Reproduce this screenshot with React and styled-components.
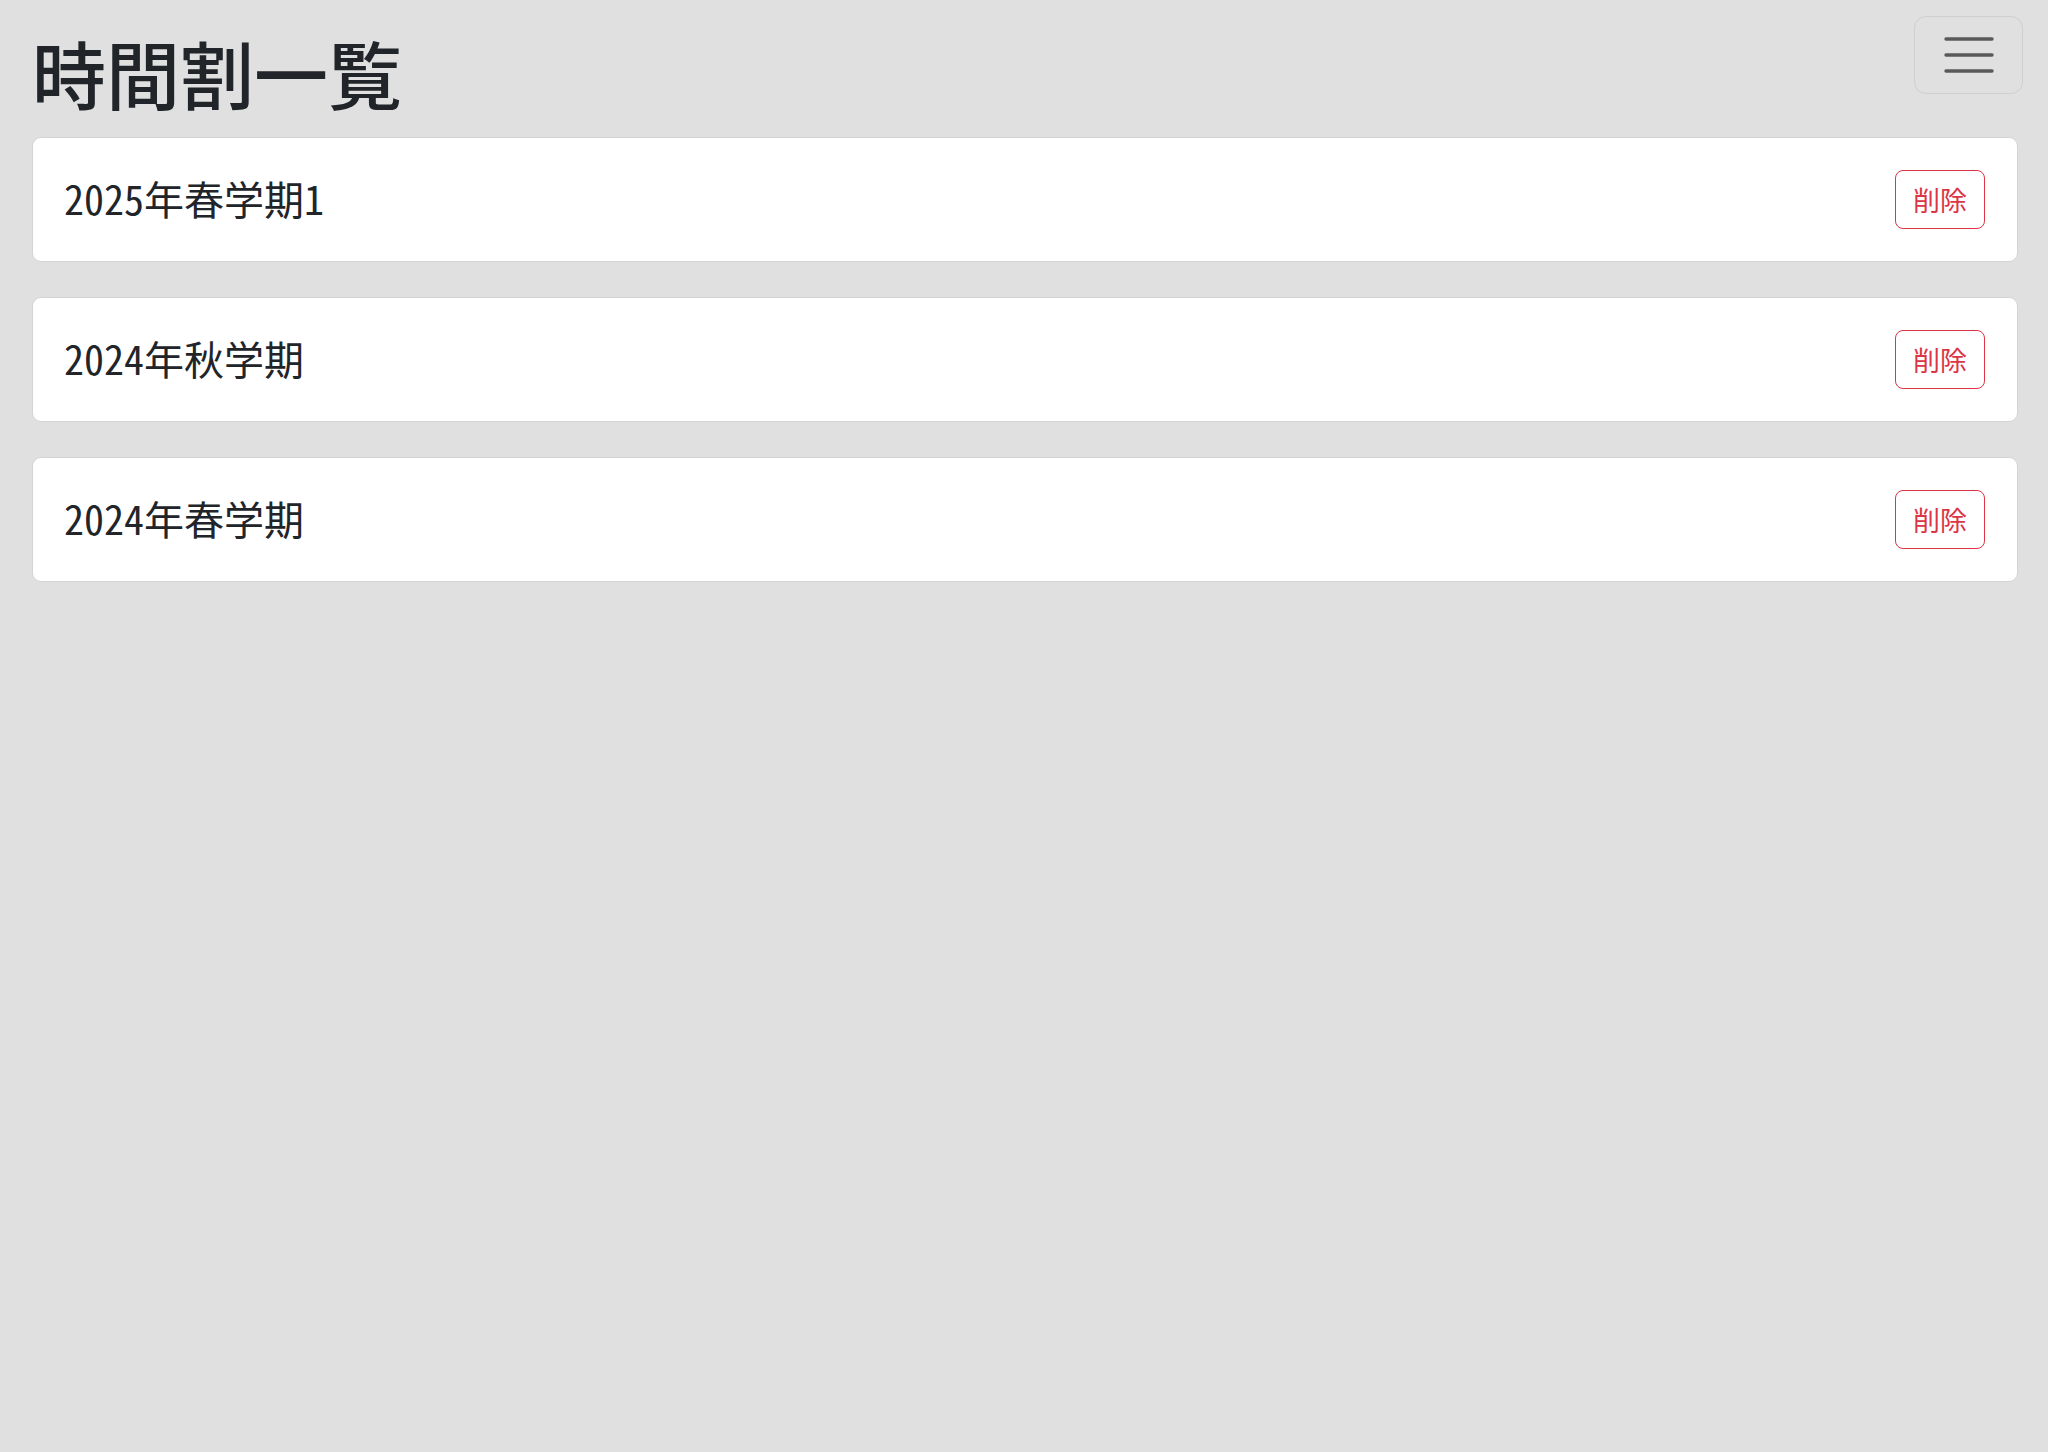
import styled, { createGlobalStyle } from "styled-components";

const GlobalStyle = createGlobalStyle`
  html, body {
    margin: 0;
    padding: 0;
    background: #e0e0e0;
  }
  body {
    font-family: "Noto Sans CJK JP", "Noto Sans", sans-serif;
    color: #212529;
  }
`

const timetables = [
  { id: 1, name: "2025年春学期1" },
  { id: 2, name: "2024年秋学期" },
  { id: 3, name: "2024年春学期" },
];

export default function App() {
  return (
    <Page>
      <GlobalStyle />
      <Header>
        <Title>時間割一覧</Title>
        <MenuButton aria-label="menu">
          <svg width="50" height="40" viewBox="0 0 50 40">
            <path d="M2 7h46M2 23h46M2 39h46" stroke="#595959" strokeWidth="3.4" strokeLinecap="round" transform="translate(0 -3)" />
          </svg>
        </MenuButton>
      </Header>

      <List>
        {timetables.map(t =>
          <Card key={t.id}>
            <Name>{t.name}</Name>
            <DeleteButton>削除</DeleteButton>
          </Card>
        )}
      </List>
    </Page>
  )
}

const Page = styled.div`
  min-height: 100vh;
  box-sizing: border-box;
  padding: 16px 25px 0 32px;
`
const Header = styled.header`
  display: flex;
  justify-content: space-between;
  align-items: flex-start;
`
const Title = styled.h1`
  margin: 13px 0 22px 0;
  font-size: 74px;
  line-height: 86px;
  font-weight: 500;
  color: #212529;
`
const MenuButton = styled.button`
  width: 109px;
  height: 78px;
  box-sizing: border-box;
  border: 1.5px solid #cfcfcf;
  border-radius: 12px;
  background: transparent;
  display: flex;
  align-items: center;
  justify-content: center;
  padding: 0;
`
const List = styled.ul`
  list-style: none;
  margin: 0 5px 0 0;
  padding: 0;
  display: flex;
  flex-direction: column;
  gap: 35px;
`
const Card = styled.li`
  height: 125px;
  box-sizing: border-box;
  background: #fff;
  border: 1.5px solid #d4d4d4;
  border-radius: 9px;
  padding: 0 32px 0 31px;
  display: flex;
  align-items: center;
  justify-content: space-between;
`
const Name = styled.span`
  font-family: "Noto Sans CJK JP", sans-serif;
  font-feature-settings: "hwid" 1;
  font-size: 40px;
  line-height: 50px;
  padding-bottom: 4px;
  color: #212529;
`
const DeleteButton = styled.button`
  font-family: "Noto Sans CJK JP", sans-serif;
  font-size: 27px;
  line-height: 39px;
  padding: 9px 17px;
  color: #dc3545;
  background: #fff;
  border: 1.5px solid #dc3545;
  border-radius: 8px;
`
